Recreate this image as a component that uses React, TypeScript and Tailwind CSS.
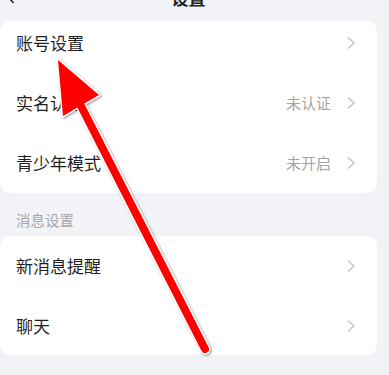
import { ChevronLeft } from "lucide-react";

type Row = { label: string; value?: string; h: string };

const group1: Row[] = [
  { label: "账号设置", h: "h-[52px] pb-[8px]" },
  { label: "实名认证", value: "未认证", h: "h-[60px]" },
  { label: "青少年模式", value: "未开启", h: "h-[60px]" },
];

const group2: Row[] = [
  { label: "新消息提醒", h: "h-[60px]" },
  { label: "聊天", h: "h-[59px]" },
];

const Arrow = () => (
  <svg width="9" height="12" viewBox="0 0 9 12" className="text-[#c4c4c4]">
    <polyline
      points="1.5,1 7,6 1.5,11"
      fill="none"
      stroke="currentColor"
      strokeWidth="1.5"
      strokeLinecap="round"
      strokeLinejoin="round"
    />
  </svg>
);

const SettingRow = ({ row }: { row: Row }) => (
  <div className={`${row.h} flex items-center justify-between pl-4 pr-[21px]`}>
    <span className="text-[17px] text-[#1f1f1f]">{row.label}</span>
    <div className="flex items-center gap-[16px]">
      {row.value && (
        <span className="text-[15px] text-[#a3a3a3]">{row.value}</span>
      )}
      <Arrow />
    </div>
  </div>
);

export default function App() {
  return (
    <div
      className="relative w-[389px] h-[375px] overflow-hidden bg-[#f1f3f7]"
      style={{ fontFamily: '"Noto Sans CJK SC", "Noto Sans", sans-serif' }}
    >
      {/* Header (cut off at top) */}
      <div className="relative h-[21px] pr-[12px]">
        <ChevronLeft
          className="absolute left-[2px] -top-[11px] w-[18px] h-[18px] text-[#222]"
          strokeWidth={2}
        />
        <div className="flex justify-center">
          <span className="-mt-[14px] text-[17px] leading-[24px] font-bold text-[#222]">
            设置
          </span>
        </div>
      </div>

      <div className="pr-[12px]">
        <div className="bg-white rounded-[10px]">
          {group1.map((r) => (
            <SettingRow key={r.label} row={r} />
          ))}
        </div>

        <div className="pl-4 pt-[17px] pb-[6px] text-[14.5px] leading-[20px] text-[#a8a8a8]">
          消息设置
        </div>

        <div className="bg-white rounded-[10px]">
          {group2.map((r) => (
            <SettingRow key={r.label} row={r} />
          ))}
        </div>
      </div>

      {/* Red annotation arrow */}
      <svg
        className="absolute inset-0 pointer-events-none"
        width="389"
        height="375"
        viewBox="0 0 389 375"
      >
        <defs>
          <filter id="sh" x="-20%" y="-20%" width="140%" height="140%">
            <feDropShadow dx="1" dy="1" stdDeviation="1" floodColor="#000" floodOpacity="0.45" />
          </filter>
        </defs>
        <g filter="url(#sh)">
          <line x1="205" y1="349" x2="80" y2="104" stroke="#ffffff" strokeWidth="11" strokeLinecap="round" />
          <polygon points="58,60 99,95 63,116" fill="#ffffff" stroke="#ffffff" strokeWidth="3" strokeLinejoin="round" />
          <line x1="205" y1="349" x2="80" y2="104" stroke="#ff0000" strokeWidth="8" strokeLinecap="round" />
          <polygon points="58,60 99,95 63,116" fill="#ff0000" />
        </g>
      </svg>
    </div>
  );
}
